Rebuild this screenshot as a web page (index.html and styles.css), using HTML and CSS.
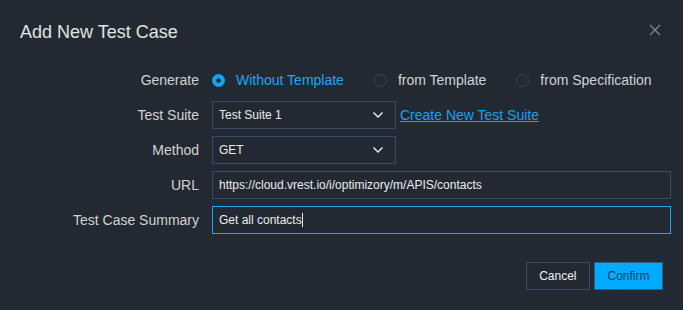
FILE: index.html
```html
<!DOCTYPE html>
<html lang="en">
<head>
    <meta charset="UTF-8">
    <title>Add New Test Case</title>
    <link rel="stylesheet" href="styles.css">
</head>
<body>
    <div class="modal">
        <div class="modal-header">
            <h2>Add New Test Case</h2>
            <button class="close-btn" aria-label="Close">
                <svg width="12" height="12" viewBox="0 0 12 12"><path d="M1 1L11 11M11 1L1 11" stroke="#7f8792" stroke-width="1.2" fill="none"/></svg>
            </button>
        </div>

        <div class="form">
            <div class="row">
                <label class="label">Generate</label>
                <div class="radios">
                    <span class="radio checked"><span class="dot"></span>Without Template</span>
                    <span class="radio"><span class="dot"></span>from Template</span>
                    <span class="radio"><span class="dot"></span>from Specification</span>
                </div>
            </div>

            <div class="row">
                <label class="label">Test Suite</label>
                <div class="select">
                    <span>Test Suite 1</span>
                    <svg width="12" height="8" viewBox="0 0 12 8"><path d="M1.5 1.5L6 6L10.5 1.5" stroke="#e6e6e6" stroke-width="1.5" fill="none"/></svg>
                </div>
                <a class="link" href="#">Create New Test Suite</a>
            </div>

            <div class="row">
                <label class="label">Method</label>
                <div class="select">
                    <span>GET</span>
                    <svg width="12" height="8" viewBox="0 0 12 8"><path d="M1.5 1.5L6 6L10.5 1.5" stroke="#e6e6e6" stroke-width="1.5" fill="none"/></svg>
                </div>
            </div>

            <div class="row">
                <label class="label">URL</label>
                <div class="input">https://cloud.vrest.io/i/optimizory/m/APIS/contacts</div>
            </div>

            <div class="row">
                <label class="label">Test Case Summary</label>
                <div class="input focused">Get all contacts<span class="caret"></span></div>
            </div>
        </div>

        <div class="footer">
            <button class="btn">Cancel</button>
            <button class="btn primary">Confirm</button>
        </div>
    </div>
</body>
</html>
```

FILE: styles.css
```css
body {
    margin: 0;
    background-color: #232933;
    font-family: "Liberation Sans", Arial, sans-serif;
    color: #d4d4d4;
}

.modal {
    width: 683px;
    height: 310px;
    box-sizing: border-box;
}

.modal-header {
    display: flex;
    justify-content: space-between;
    align-items: center;
    padding: 22px 21px 0 20px;
    height: 20px;
}

.modal-header h2 {
    margin: 0;
    font-size: 18px;
    font-weight: normal;
    color: #e2e2e2;
}

.close-btn {
    background: none;
    border: none;
    padding: 0;
    display: flex;
    margin-top: -5px;
    margin-right: 1px;
}

.form {
    margin-top: 24px;
    display: flex;
    flex-direction: column;
    gap: 7px;
}

.row {
    display: flex;
    align-items: center;
    height: 28px;
}

.label {
    flex-shrink: 0;
    width: 199px;
    padding-right: 13px;
    text-align: right;
    font-size: 14px;
    color: #d2d2d2;
}

.radios {
    display: flex;
    gap: 30px;
    font-size: 14px;
}

.radio {
    display: flex;
    align-items: center;
    color: #d2d2d2;
}

.radio .dot {
    width: 11px;
    height: 11px;
    border: 1px solid #3a4458;
    border-radius: 50%;
    margin-right: 11px;
}

.radio.checked {
    color: #19a6f5;
}

.radio.checked .dot {
    border-color: #0ea6fb;
    background: radial-gradient(circle, #232933 2px, #0ea6fb 2.5px);
}

.select {
    width: 165px;
    height: 26px;
    border: 1px solid #3a4b66;
    display: flex;
    align-items: center;
    justify-content: space-between;
    padding: 0 11px 0 6px;
    font-size: 12px;
    color: #ececec;
}

.link {
    margin-left: 4px;
    font-size: 14px;
    color: #16a2f3;
}

.input {
    width: 444px;
    height: 26px;
    border: 1px solid #3a4b66;
    display: flex;
    align-items: center;
    padding: 0 7px 0 6px;
    font-size: 12px;
    color: #ececec;
}

.input.focused {
    border-color: #16a8f5;
}

.caret {
    width: 1px;
    height: 14px;
    background: #e6e6e6;
}

.footer {
    display: flex;
    justify-content: flex-end;
    gap: 4px;
    padding-right: 20px;
    margin-top: 28px;
}

.btn {
    height: 28px;
    padding: 0 12.5px;
    font-family: "Liberation Sans", Arial, sans-serif;
    font-size: 12px;
    background: transparent;
    border: 1px solid #3a4b66;
    color: #f0f0f0;
}

.btn.primary {
    background: #00aaff;
    color: #1d3d5e;
    border-color: #2d5d85;
    padding: 0 12.5px;
}
```
